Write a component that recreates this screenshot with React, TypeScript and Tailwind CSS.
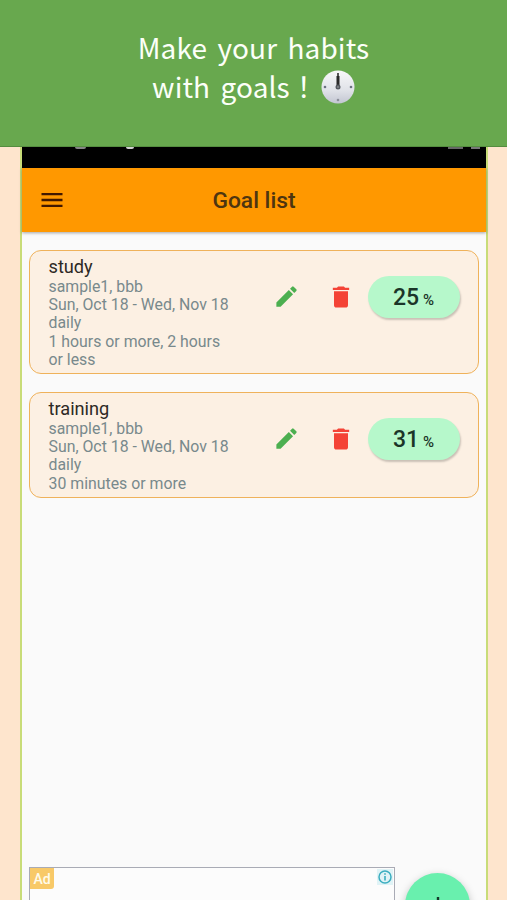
import { MdDelete, MdEdit, MdMenu } from 'react-icons/md';

interface Goal {
  title: string;
  tags: string;
  period: string;
  repeat: string;
  target: string;
  percent: number;
}

const goals: Goal[] = [
  {
    title: 'study',
    tags: 'sample1, bbb',
    period: 'Sun, Oct 18 - Wed, Nov 18',
    repeat: 'daily',
    target: '1 hours or more, 2 hours or less',
    percent: 25,
  },
  {
    title: 'training',
    tags: 'sample1, bbb',
    period: 'Sun, Oct 18 - Wed, Nov 18',
    repeat: 'daily',
    target: '30 minutes or more',
    percent: 31,
  },
];

function Clock() {
  return (
    <svg viewBox="0 0 34 34" className="ml-[3px] h-[34px] w-[34px] shrink-0">
      <defs>
        <linearGradient id="face" x1="0" y1="0" x2="0" y2="1">
          <stop offset="0" stopColor="#f8f8f9" />
          <stop offset="0.6" stopColor="#e0e2e8" />
          <stop offset="1" stopColor="#c3c6d2" />
        </linearGradient>
      </defs>
      <circle cx="17" cy="17" r="16.5" fill="url(#face)" />
      <circle cx="4" cy="17" r="1.3" fill="#6b7280" />
      <circle cx="30" cy="17" r="1.3" fill="#6b7280" />
      <circle cx="17" cy="30" r="1.3" fill="#8b8f99" />
      <path d="M17 3v14" stroke="#555" strokeWidth="2" />
      <path d="M17 6v11" stroke="#292929" strokeWidth="3" />
      <circle cx="17" cy="17" r="2.5" fill="#555960" />
      <circle cx="17" cy="17" r="0.8" fill="#aaa" />
    </svg>
  );
}

function GoalCard({ goal }: { goal: Goal }) {
  return (
    <div className="flex items-start rounded-[12px] border-[1.5px] border-[#efb25b] bg-[#fcf0e3] pt-[6px] pb-[4px] pl-[18.5px]">
      <div className="w-[188px] text-[15.85px] leading-[18.2px] text-[#78898c]">
        <h2 className="mb-[1px] text-[18.2px] leading-[20px] text-[#2d2925]">{goal.title}</h2>
        <p>{goal.tags}</p>
        <p>{goal.period}</p>
        <p>{goal.repeat}</p>
        <p>{goal.target}</p>
      </div>
      <div className="mt-[18px] ml-[36.5px] flex h-[43px] items-center">
        <MdEdit className="h-[27px] w-[27px] text-[#4caf50]" />
        <MdDelete className="ml-[27px] h-[28px] w-[28px] text-[#f44336]" />
        <div className="ml-[13px] flex h-[42px] w-[92px] items-baseline justify-center rounded-full bg-[#b6f8cb] pr-[1px] leading-[43px] text-[#1b3528] shadow-[1px_2px_2px_rgba(0,0,0,0.2)]">
          <span className="text-[23px] font-medium">{goal.percent}</span>
          <span className="ml-[4px] text-[15px] font-medium">%</span>
        </div>
      </div>
    </div>
  );
}

export default function App() {
  return (
    <div className="flex h-[900px] w-[507px] flex-col overflow-hidden bg-[#fee5cd] font-[Roboto,sans-serif]">
      {/* Promo banner */}
      <header className="z-10 flex h-[147px] shrink-0 flex-col items-center border-b border-[#558d40] bg-[#68a84e] pt-[28px] font-['Noto_Sans_CJK_JP',sans-serif] text-[28px] leading-[39px] tracking-[0.1px] text-[#fcfff8] [word-spacing:4px]">
        <p>Make your habits</p>
        <div className="flex items-center">
          <span>with goals！</span>
          <Clock />
        </div>
      </header>

      {/* Phone screen */}
      <main className="mx-[20px] flex min-h-0 w-[468px] flex-1 flex-col border-x-2 border-[#c8dc78] bg-[#fafafa]">
        <div className="flex h-[21px] shrink-0 items-start justify-between bg-black pr-[6px] pl-[53px]">
          <div className="flex gap-[40px]">
            <span className="h-[2px] w-[11px] rounded-b-full bg-[#858585]" />
            <span className="h-[2px] w-[8px] rounded-b-full bg-[#d0d0d0]" />
          </div>
          <div className="flex gap-[8px]">
            <span className="h-[2px] w-[15px] bg-[#666]" />
            <span className="h-[2px] w-[9px] bg-[#777]" />
          </div>
        </div>
        <div className="grid h-[64px] shrink-0 grid-cols-3 items-center bg-[#ff9800] shadow-[0_1px_3px_rgba(0,0,0,0.35)]">
          <MdMenu className="ml-[16px] h-[28px] w-[28px] text-[#421800]" />
          <h1 className="pt-[2px] text-center text-[22.8px] font-medium text-[#4e3510]">Goal list</h1>
        </div>

        <div className="flex flex-1 flex-col gap-[18px] px-[7px] pt-[18px]">
          {goals.map((goal) => (
            <GoalCard key={goal.title} goal={goal} />
          ))}
        </div>

        {/* Ad slot and add button */}
        <div className="flex h-[34px] shrink-0 items-start overflow-hidden pl-[7px]">
          <div className="mt-px flex h-[60px] w-[366px] shrink-0 items-start justify-between border border-[#a9abb5] bg-[#fcfcfc]">
            <span className="h-[21px] w-[24px] rounded-br-[3px] bg-[#f8c968] text-center text-[14px] font-medium leading-[23px] text-[#fffbea]">
              Ad
            </span>
            <svg viewBox="0 0 16 16" className="mt-[1px] mr-[1px] h-[16px] w-[16px] bg-[#e0f3f6]">
              <circle cx="8" cy="8" r="6" fill="none" stroke="#3baec0" strokeWidth="1.5" />
              <path d="M8 4.3v1.5M8 7v4.6" stroke="#3baec0" strokeWidth="1.6" />
            </svg>
          </div>
          <div className="mt-[7px] ml-[10px] flex h-[65px] w-[65px] shrink-0 justify-center rounded-full bg-[#69f0ae] pt-[24px] shadow-[0_3px_8px_rgba(0,0,0,0.25)]">
            <svg viewBox="0 0 18 18" className="h-[18px] w-[18px]">
              <path d="M9 0v18M0 9h18" stroke="#16382a" strokeWidth="2.4" />
            </svg>
          </div>
        </div>
      </main>
    </div>
  );
}
